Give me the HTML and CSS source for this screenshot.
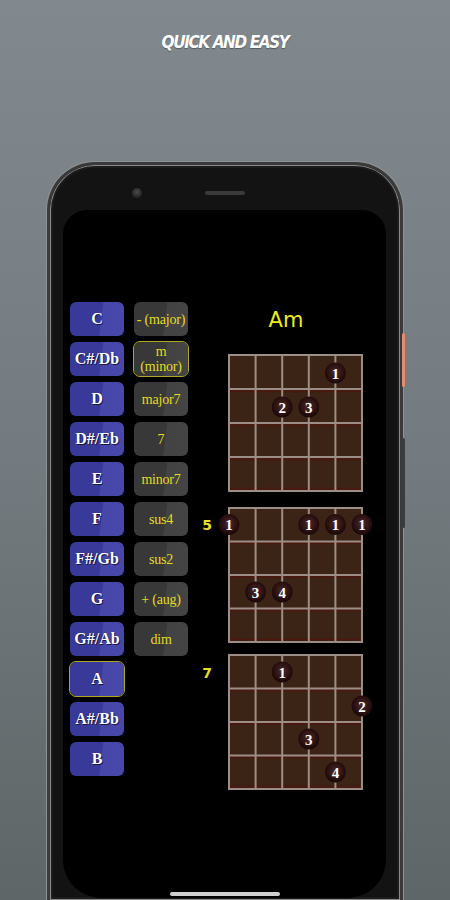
FILE: index.html
```html
<!DOCTYPE html>
<html>
<head>
<meta charset="utf-8">
<link rel="stylesheet" href="styles.css">
</head>
<body>
<h1 class="headline">QUICK AND EASY</h1>
<div class="phone">
  <span class="side-btn power"></span>
  <span class="side-btn volume"></span>
  <div class="top-bar">
    <span class="camera"></span>
    <span class="speaker"></span>
  </div>
  <div class="screen">
    <div class="app">
      <div class="col notes">
        <div class="btn note">C</div>
        <div class="btn note">C#/Db</div>
        <div class="btn note">D</div>
        <div class="btn note">D#/Eb</div>
        <div class="btn note">E</div>
        <div class="btn note">F</div>
        <div class="btn note">F#/Gb</div>
        <div class="btn note">G</div>
        <div class="btn note">G#/Ab</div>
        <div class="btn note selected">A</div>
        <div class="btn note">A#/Bb</div>
        <div class="btn note">B</div>
      </div>
      <div class="col types">
        <div class="btn type">- (major)</div>
        <div class="btn type selected">m<br>(minor)</div>
        <div class="btn type">major7</div>
        <div class="btn type">7</div>
        <div class="btn type">minor7</div>
        <div class="btn type">sus4</div>
        <div class="btn type">sus2</div>
        <div class="btn type">+ (aug)</div>
        <div class="btn type">dim</div>
      </div>
      <div class="chords">
        <div class="chord-name">Am</div>
        <svg class="fret fret1" width="180" height="138" viewBox="0 0 180 138">
          <defs>
            <radialGradient id="dotg" cx="50%" cy="45%" r="55%">
              <stop offset="0%" stop-color="#4a2a28"/>
              <stop offset="70%" stop-color="#2a1010"/>
              <stop offset="100%" stop-color="#180606"/>
            </radialGradient>
          </defs>
          <g class="board">
            <rect x="33" y="1" width="133" height="136" fill="#3b2315"/>
            <g stroke="#4e160c" stroke-width="1.5">
              <line x1="33" y1="37.5" x2="166" y2="37.5"/>
              <line x1="33" y1="71.5" x2="166" y2="71.5"/>
              <line x1="33" y1="105.5" x2="166" y2="105.5"/>
              <line x1="33" y1="134.5" x2="166" y2="134.5"/>
            </g>
            <g stroke="#9c8e86" stroke-width="2">
              <line x1="33" y1="1" x2="166" y2="1"/>
              <line x1="33" y1="35" x2="166" y2="35"/>
              <line x1="33" y1="69" x2="166" y2="69"/>
              <line x1="33" y1="103" x2="166" y2="103"/>
              <line x1="33" y1="137" x2="166" y2="137"/>
              <line x1="33" y1="0" x2="33" y2="138"/>
              <line x1="59.6" y1="0" x2="59.6" y2="138"/>
              <line x1="86.2" y1="0" x2="86.2" y2="138"/>
              <line x1="112.8" y1="0" x2="112.8" y2="138"/>
              <line x1="139.4" y1="0" x2="139.4" y2="138"/>
              <line x1="166" y1="0" x2="166" y2="138"/>
            </g>
          </g>
          <g class="dots">
            <circle cx="139.4" cy="19" r="10.5" fill="url(#dotg)"/>
            <text x="139.4" y="24.5">1</text>
            <circle cx="86.2" cy="53" r="10.5" fill="url(#dotg)"/>
            <text x="86.2" y="58.5">2</text>
            <circle cx="112.8" cy="53" r="10.5" fill="url(#dotg)"/>
            <text x="112.8" y="58.5">3</text>
          </g>
        </svg>
        <svg class="fret fret2" width="180" height="136" viewBox="0 0 180 136">
          <g class="board">
            <rect x="33" y="1" width="133" height="134" fill="#3b2315"/>
            <g stroke="#4e160c" stroke-width="1.5">
              <line x1="33" y1="36.5" x2="166" y2="36.5"/>
              <line x1="33" y1="70" x2="166" y2="70"/>
              <line x1="33" y1="103.5" x2="166" y2="103.5"/>
              <line x1="33" y1="132.5" x2="166" y2="132.5"/>
            </g>
            <g stroke="#9c8e86" stroke-width="2">
              <line x1="33" y1="1" x2="166" y2="1"/>
              <line x1="33" y1="34.5" x2="166" y2="34.5"/>
              <line x1="33" y1="68" x2="166" y2="68"/>
              <line x1="33" y1="101.5" x2="166" y2="101.5"/>
              <line x1="33" y1="135" x2="166" y2="135"/>
              <line x1="33" y1="0" x2="33" y2="136"/>
              <line x1="59.6" y1="0" x2="59.6" y2="136"/>
              <line x1="86.2" y1="0" x2="86.2" y2="136"/>
              <line x1="112.8" y1="0" x2="112.8" y2="136"/>
              <line x1="139.4" y1="0" x2="139.4" y2="136"/>
              <line x1="166" y1="0" x2="166" y2="136"/>
            </g>
          </g>
          <text class="fret-label" x="11" y="23">5</text>
          <g class="dots">
            <circle cx="33" cy="17.5" r="10.5" fill="url(#dotg)"/>
            <text x="33" y="23">1</text>
            <circle cx="112.8" cy="17.5" r="10.5" fill="url(#dotg)"/>
            <text x="112.8" y="23">1</text>
            <circle cx="139.4" cy="17.5" r="10.5" fill="url(#dotg)"/>
            <text x="139.4" y="23">1</text>
            <circle cx="166" cy="17.5" r="10.5" fill="url(#dotg)"/>
            <text x="166" y="23">1</text>
            <circle cx="59.6" cy="85" r="10.5" fill="url(#dotg)"/>
            <text x="59.6" y="90.5">3</text>
            <circle cx="86.2" cy="85" r="10.5" fill="url(#dotg)"/>
            <text x="86.2" y="90.5">4</text>
          </g>
        </svg>
        <svg class="fret fret3" width="180" height="136" viewBox="0 0 180 136">
          <g class="board">
            <rect x="33" y="1" width="133" height="134" fill="#3b2315"/>
            <g stroke="#4e160c" stroke-width="1.5">
              <line x1="33" y1="36.5" x2="166" y2="36.5"/>
              <line x1="33" y1="70" x2="166" y2="70"/>
              <line x1="33" y1="103.5" x2="166" y2="103.5"/>
              <line x1="33" y1="132.5" x2="166" y2="132.5"/>
            </g>
            <g stroke="#9c8e86" stroke-width="2">
              <line x1="33" y1="1" x2="166" y2="1"/>
              <line x1="33" y1="34.5" x2="166" y2="34.5"/>
              <line x1="33" y1="68" x2="166" y2="68"/>
              <line x1="33" y1="101.5" x2="166" y2="101.5"/>
              <line x1="33" y1="135" x2="166" y2="135"/>
              <line x1="33" y1="0" x2="33" y2="136"/>
              <line x1="59.6" y1="0" x2="59.6" y2="136"/>
              <line x1="86.2" y1="0" x2="86.2" y2="136"/>
              <line x1="112.8" y1="0" x2="112.8" y2="136"/>
              <line x1="139.4" y1="0" x2="139.4" y2="136"/>
              <line x1="166" y1="0" x2="166" y2="136"/>
            </g>
          </g>
          <text class="fret-label" x="11" y="24">7</text>
          <g class="dots">
            <circle cx="86.2" cy="18" r="10.5" fill="url(#dotg)"/>
            <text x="86.2" y="23.5">1</text>
            <circle cx="166" cy="52" r="10.5" fill="url(#dotg)"/>
            <text x="166" y="57.5">2</text>
            <circle cx="112.8" cy="85" r="10.5" fill="url(#dotg)"/>
            <text x="112.8" y="90.5">3</text>
            <circle cx="139.4" cy="118" r="10.5" fill="url(#dotg)"/>
            <text x="139.4" y="123.5">4</text>
          </g>
        </svg>
      </div>
    </div>
    <div class="home-bar"></div>
  </div>
</div>
</body>
</html>
```

FILE: styles.css
```css
html, body {
  margin: 0;
  padding: 0;
}
body {
  width: 450px;
  height: 900px;
  overflow: hidden;
  background: linear-gradient(180deg, #81898e 0%, #737b80 50%, #5e6667 100%);
  font-family: "Liberation Sans", Arial, sans-serif;
}
.headline {
  margin: 0;
  padding-top: 32px;
  height: 20px;
  line-height: 20px;
  text-align: center;
  color: #ffffff;
  font-family: "DejaVu Sans Condensed", "DejaVu Sans", sans-serif;
  font-weight: bold;
  font-style: italic;
  font-size: 17px;
  letter-spacing: -1.4px;
  text-shadow: 0 1px 1px rgba(0,0,0,0.35);
}
.phone {
  position: relative;
  box-sizing: border-box;
  margin: 110px 0 0 47px;
  width: 356px;
  height: 738px;
  border-radius: 48px 48px 0 0;
  background: #131313;
  border: 3px solid #3a3a3a;
  border-bottom: 0;
  box-shadow: 0 0 0 1px #8f9394, inset 0 0 0 1px #8a8a8a, inset 0 0 0 3px #1c1c1c;
  padding: 0 14px 0 13px;
}
.side-btn {
  position: absolute;
  width: 3px;
  border-radius: 2px;
}
.side-btn.power {
  right: -5px;
  top: 168px;
  height: 54px;
  background: #e98a6c;
}
.side-btn.volume {
  right: -5px;
  top: 273px;
  height: 90px;
  background: #3a3d3f;
}
.top-bar {
  height: 45px;
  display: flex;
  align-items: flex-start;
  box-sizing: border-box;
}
.camera {
  margin-top: 23px;
  margin-left: 69px;
  width: 10px;
  height: 10px;
  border-radius: 50%;
  background: radial-gradient(circle at 50% 40%, #4a4a4a 0%, #2a2a2a 60%, #1e1e1e 100%);
}
.speaker {
  margin-top: 26px;
  margin-left: 63px;
  width: 40px;
  height: 4px;
  border-radius: 2px;
  background: #3a3a3a;
}
.screen {
  box-sizing: border-box;
  width: 323px;
  height: 688px;
  background: #000;
  border-radius: 24px 24px 38px 38px;
  padding: 92px 0 0 7px;
  display: flex;
  flex-direction: column;
}
.app {
  display: flex;
  align-items: flex-start;
}
.col {
  display: flex;
  flex-direction: column;
  gap: 6px;
}
.notes {
  margin-right: 10px;
}
.types {
  margin-right: 8px;
}
.btn {
  box-sizing: border-box;
  width: 54px;
  height: 34px;
  border-radius: 6px;
  display: flex;
  align-items: center;
  justify-content: center;
  text-align: center;
  font-family: "Liberation Serif", "Times New Roman", serif;
}
.note {
  background: linear-gradient(97deg, #39399a 0%, #39399a 57%, #4747aa 58%, #4848ab 100%);
  color: #ffffff;
  font-weight: bold;
  font-size: 16px;
  text-shadow: 1px 1px 0 #16164a, -0.5px -0.5px 0 #22226a;
}
.type {
  background: linear-gradient(97deg, #383838 0%, #383838 57%, #434343 58%, #444444 100%);
  color: #e4dc1e;
  font-size: 14px;
  line-height: 15px;
  white-space: nowrap;
  letter-spacing: -0.2px;
}
.selected {
  outline: 1.5px solid #b0a622;
  outline-offset: 0;
}
.chords {
  width: 180px;
  display: flex;
  flex-direction: column;
}
.chord-name {
  height: 36px;
  line-height: 36px;
  text-align: center;
  color: #eeea22;
  font-family: "DejaVu Sans", sans-serif;
  font-size: 21px;
  margin-bottom: 16px;
}
.fret {
  display: block;
  overflow: visible;
}
.fret2 {
  margin-top: 15px;
}
.fret3 {
  margin-top: 11px;
}
.dots text {
  fill: #ffffff;
  font-family: "Liberation Serif", "Times New Roman", serif;
  font-weight: bold;
  font-size: 15px;
  text-anchor: middle;
}
.fret-label {
  fill: #e6e01e;
  font-family: "DejaVu Sans", sans-serif;
  font-weight: bold;
  font-size: 14px;
  text-anchor: middle;
}
.home-bar {
  margin-top: auto;
  margin-bottom: 2px;
  align-self: center;
  margin-left: -7px;
  width: 110px;
  height: 4px;
  border-radius: 2px;
  background: #cfcfcf;
}
```
